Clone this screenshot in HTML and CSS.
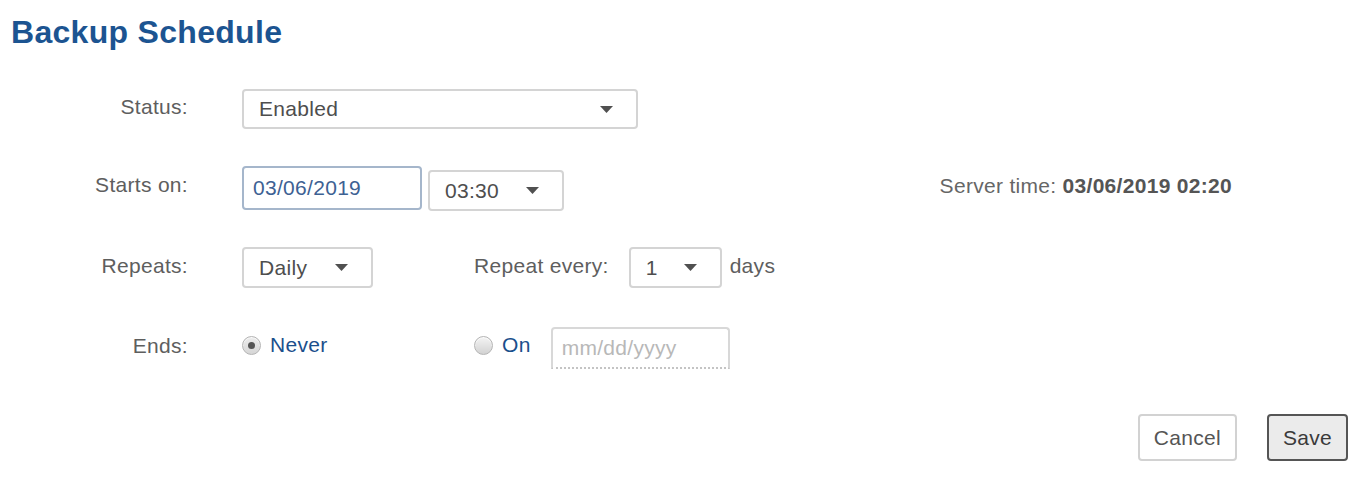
FILE: index.html
```html
<!DOCTYPE html>
<html lang="en">
<head>
<meta charset="utf-8">
<title>Backup Schedule</title>
<link rel="stylesheet" href="styles.css">
</head>
<body>
<h1 class="title">Backup Schedule</h1>
<form class="form">
  <div class="row row-status">
    <span class="label">Status:</span>
    <div class="select select-status">
      <span class="select-value">Enabled</span>
      <svg class="caret" width="13" height="7" viewBox="0 0 13 7"><path d="M0 0H13L6.5 7Z"/></svg>
    </div>
  </div>

  <div class="row row-starts">
    <span class="label label-starts">Starts on:</span>
    <div class="date-input">03/06/2019</div>
    <div class="select select-time">
      <span class="select-value">03:30</span>
      <svg class="caret" width="13" height="7" viewBox="0 0 13 7"><path d="M0 0H13L6.5 7Z"/></svg>
    </div>
    <div class="server-time">Server time: <b>03/06/2019 02:20</b></div>
  </div>

  <div class="row row-repeats">
    <span class="label label-tight">Repeats:</span>
    <div class="cell">
      <div class="select select-daily">
        <span class="select-value">Daily</span>
        <svg class="caret" width="13" height="7" viewBox="0 0 13 7"><path d="M0 0H13L6.5 7Z"/></svg>
      </div>
    </div>
    <span class="inline-text">Repeat every:</span>
    <div class="select select-every">
      <span class="select-value">1</span>
      <svg class="caret" width="13" height="7" viewBox="0 0 13 7"><path d="M0 0H13L6.5 7Z"/></svg>
    </div>
    <span class="inline-text unit">days</span>
  </div>

  <div class="row row-ends">
    <span class="label">Ends:</span>
    <div class="cell">
      <span class="radio"><span class="radio-dot checked"></span>Never</span>
    </div>
    <span class="radio"><span class="radio-dot"></span>On</span>
    <div class="date-input date-empty">mm/dd/yyyy</div>
  </div>

  <div class="actions">
    <button type="button" class="btn">Cancel</button>
    <button type="button" class="btn btn-primary">Save</button>
  </div>
</form>
</body>
</html>
```

FILE: styles.css
```css
html, body {
  margin: 0;
  padding: 0;
  background: #ffffff;
}

body {
  font-family: "Liberation Sans", Arial, Helvetica, sans-serif;
  font-size: 21px;
  letter-spacing: 0.3px;
  color: #555555;
}

.title {
  margin: 0;
  padding: 12px 0 0 11px;
  height: 40px;
  font-size: 32px;
  line-height: 40px;
  font-weight: bold;
  letter-spacing: 0.3px;
  color: #1c5491;
}

.form {
  display: flex;
  flex-direction: column;
  padding-top: 37px;
}

.row {
  display: flex;
  align-items: center;
  line-height: 24px;
}

.row + .row {
  margin-top: 37px;
}

.row-repeats {
  margin-top: 39px;
}

.row + .row-ends {
  margin-top: 39px;
}

.row-status .label {
  margin-bottom: 4px;
}

.label {
  width: 188px;
  margin-right: 54px;
  text-align: right;
  color: #5e5e5e;
  margin-bottom: 5px;
}

.label-starts {
  margin-bottom: 7px;
}

.label-tight {
  margin-bottom: 4px;
}

.select {
  box-sizing: border-box;
  display: flex;
  align-items: center;
  height: 41px;
  padding: 0 23px 0 15px;
  border: 2px solid #d4d4d4;
  border-radius: 4px;
  background: #ffffff;
  color: #4e4e4e;
}

.select-value {
  flex: 1;
}

.caret {
  flex: none;
  fill: #505050;
}

.select-status {
  width: 396px;
  height: 40px;
}

.select-time {
  width: 136px;
  align-self: flex-end;
  margin-bottom: -1px;
}

.select-daily {
  width: 131px;
}

.select-every {
  width: 93px;
  margin-left: 20px;
}

.date-input {
  box-sizing: border-box;
  display: flex;
  align-items: center;
  width: 180px;
  height: 44px;
  padding: 0 9px;
  border: 2px solid #a5b6cb;
  border-radius: 4px;
  color: #3d6193;
  margin-right: 6px;
}

.date-empty {
  width: 179px;
  height: 42px;
  margin: 0 0 0 20px;
  border-color: #d8d8d8;
  border-bottom: 2px dotted #c4c4c4;
  border-radius: 4px 4px 0 0;
  color: #b8b8b8;
}

.server-time {
  margin-left: auto;
  margin-right: 128px;
  margin-bottom: 5px;
  color: #666666;
}

.server-time b {
  color: #555555;
}

.cell {
  width: 232px;
  display: flex;
  align-items: center;
}

.inline-text {
  margin-bottom: 4px;
  color: #5e5e5e;
}

.unit {
  margin-left: 8px;
}

.radio {
  display: flex;
  align-items: center;
  gap: 9px;
  color: #1b4f8c;
  margin-bottom: 6px;
}

.radio-dot {
  box-sizing: border-box;
  position: relative;
  width: 19px;
  height: 19px;
  border-radius: 50%;
  border: 1px solid #b4b4b4;
  background: linear-gradient(#f4f4f4, #d2d2d2);
  box-shadow: inset 0 1px 1px rgba(255, 255, 255, 0.8);
}

.radio-dot.checked {
  background: linear-gradient(#ececec, #d6d6d6);
}

.radio-dot.checked::after {
  content: "";
  position: absolute;
  left: 5px;
  top: 5px;
  width: 7px;
  height: 7px;
  border-radius: 50%;
  background: #555555;
}

.actions {
  display: flex;
  justify-content: flex-end;
  gap: 30px;
  margin-top: 45px;
  padding-right: 12px;
}

.btn {
  box-sizing: border-box;
  height: 47px;
  padding: 0 14px;
  border: 2px solid #d2d2d2;
  border-radius: 4px;
  background: #ffffff;
  font-family: inherit;
  font-size: 21px;
  letter-spacing: 0.3px;
  color: #555555;
  cursor: pointer;
}

.btn-primary {
  border-color: #555555;
  background: #ebebeb;
  color: #3a3a3a;
}
```
